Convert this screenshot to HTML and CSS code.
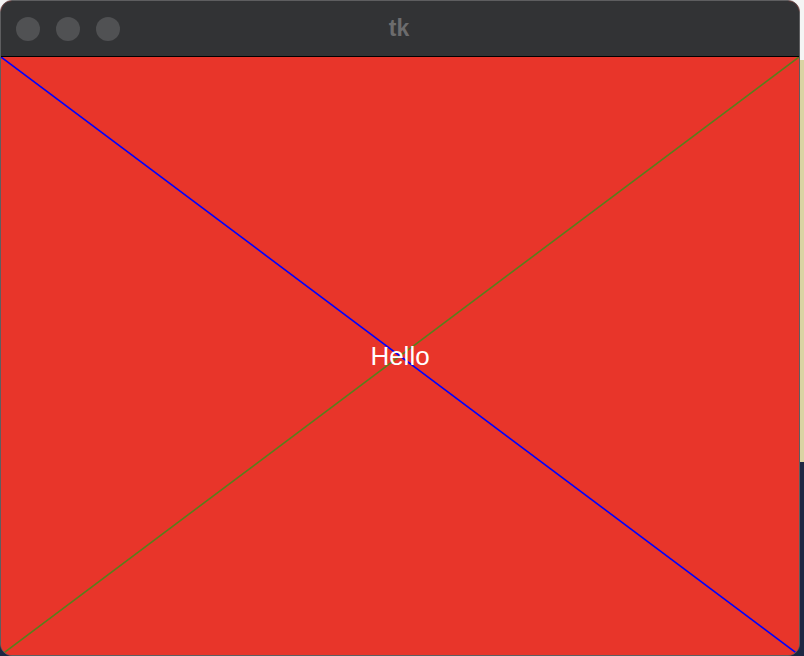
FILE: index.html
```html
<!DOCTYPE html>
<html>
<head>
<meta charset="utf-8">
<link rel="stylesheet" href="styles.css">
</head>
<body>
<div class="desktop">
  <div class="window">
    <div class="titlebar">
      <div class="lights">
        <span class="light"></span>
        <span class="light"></span>
        <span class="light"></span>
      </div>
      <div class="title">tk</div>
    </div>
    <div class="canvas">
      <svg class="drawing" viewBox="0 0 798 597" preserveAspectRatio="none" xmlns="http://www.w3.org/2000/svg">
        <line x1="0" y1="0" x2="798" y2="597" stroke="#0000ff" stroke-width="1.6"/>
        <line x1="0" y1="597" x2="798" y2="0" stroke="#587f1c" stroke-width="1.6"/>
      </svg>
      <div class="label">Hello</div>
    </div>
  </div>
  <div class="strip"></div>
</div>
</body>
</html>
```
FILE: styles.css
```css
html, body {
  margin: 0;
  padding: 0;
}
body {
  width: 804px;
  height: 656px;
  overflow: hidden;
  background: linear-gradient(to bottom, #f4f4f4 0, #f4f4f4 60px, #d9d3a3 60px, #d9d3a3 462px, #1d2844 462px, #1d2844 100%);
}
.desktop {
  display: flex;
  height: 656px;
}
.window {
  width: 800px;
  height: 656px;
  box-sizing: border-box;
  border: 1px solid #5e5e60;
  border-radius: 12px;
  overflow: hidden;
  display: flex;
  flex-direction: column;
  background: #e8352a;
}
.titlebar {
  height: 55px;
  flex: none;
  background: #323335;
  border-bottom: 1px solid #000;
  display: flex;
  align-items: center;
  position: relative;
}
.lights {
  display: flex;
  gap: 16px;
  padding-left: 15px;
}
.light {
  width: 24px;
  height: 24px;
  border-radius: 50%;
  background: #505153;
}
.title {
  position: absolute;
  left: 0;
  right: 0;
  top: 0;
  bottom: 0;
  display: flex;
  align-items: center;
  justify-content: center;
  font-family: "Liberation Sans", Arial, sans-serif;
  font-weight: bold;
  font-size: 23px;
  color: #6c6c6d;
  padding-right: 2px;
}
.canvas {
  flex: 1;
  position: relative;
  background: #e8352a;
}
.drawing {
  position: absolute;
  left: 0;
  top: 0;
  width: 100%;
  height: 100%;
  display: block;
}
.label {
  position: absolute;
  left: 0;
  right: 0;
  top: 284px;
  text-align: center;
  font-family: "Liberation Sans", Arial, sans-serif;
  font-size: 26px;
  color: #ffffff;
  line-height: 30px;
}
.strip {
  flex: 1;
}
```
